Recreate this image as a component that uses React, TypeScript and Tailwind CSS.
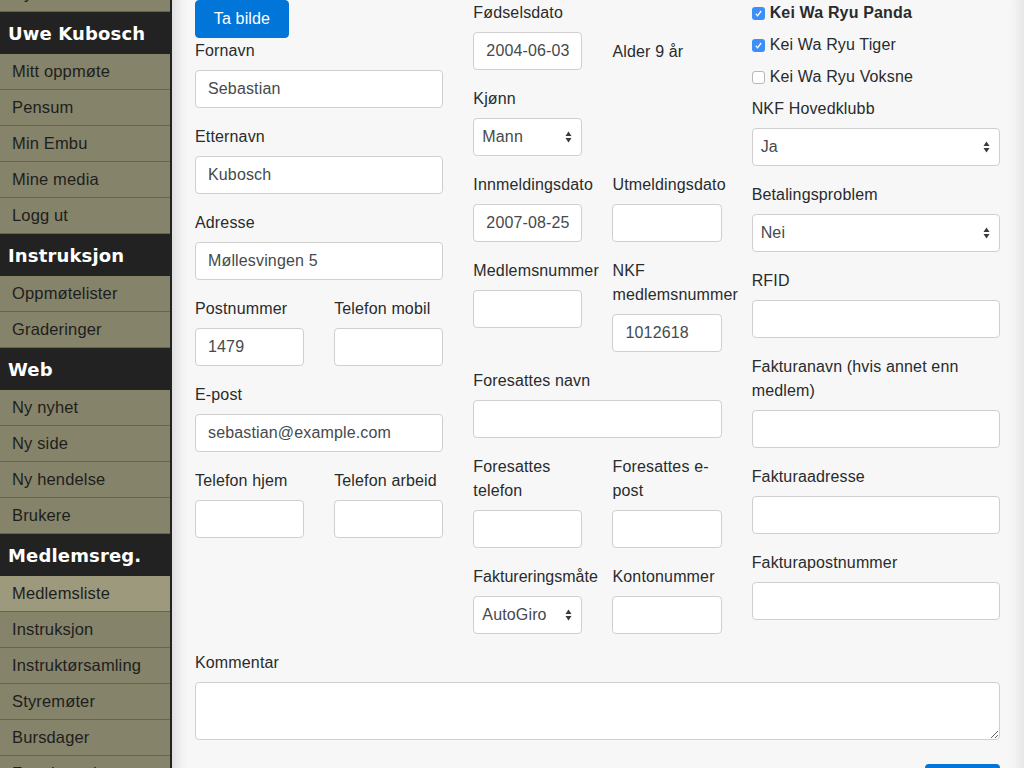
import type { ReactNode } from 'react';

type NavEntry = { kind: 'header' | 'item'; label: string; active?: boolean };

const NAV: NavEntry[] = [
  { kind: 'item', label: 'Nyheter' },
  { kind: 'header', label: 'Uwe Kubosch' },
  { kind: 'item', label: 'Mitt oppmøte' },
  { kind: 'item', label: 'Pensum' },
  { kind: 'item', label: 'Min Embu' },
  { kind: 'item', label: 'Mine media' },
  { kind: 'item', label: 'Logg ut' },
  { kind: 'header', label: 'Instruksjon' },
  { kind: 'item', label: 'Oppmøtelister' },
  { kind: 'item', label: 'Graderinger' },
  { kind: 'header', label: 'Web' },
  { kind: 'item', label: 'Ny nyhet' },
  { kind: 'item', label: 'Ny side' },
  { kind: 'item', label: 'Ny hendelse' },
  { kind: 'item', label: 'Brukere' },
  { kind: 'header', label: 'Medlemsreg.' },
  { kind: 'item', label: 'Medlemsliste', active: true },
  { kind: 'item', label: 'Instruksjon' },
  { kind: 'item', label: 'Instruktørsamling' },
  { kind: 'item', label: 'Styremøter' },
  { kind: 'item', label: 'Bursdager' },
  { kind: 'item', label: 'Fremhevede' },
];

const inputCls =
  'block w-full h-[38px] bg-white border border-[#cfcfcf] rounded-[4px] px-3 text-[16px] text-[#464a4c] outline-none';

function Sidebar() {
  return (
    <aside className="w-[172px] shrink-0 bg-[#858369] border-r-2 border-[#222]">
      <div className="-mt-[24px]">
        {NAV.map((n, i) =>
          n.kind === 'header' ? (
            <div
              key={i}
              className="h-[42px] bg-[#222] text-white font-bold text-[18px] pl-2 flex items-center font-['DejaVu_Sans',Verdana,sans-serif]"
            >
              {n.label}
            </div>
          ) : (
            <div
              key={i}
              className={`h-[36px] border-b border-[#67654f] pl-3 flex items-center text-[16.5px] text-[#1e1e1e] ${
                n.active ? 'bg-[#9c997d]' : ''
              }`}
            >
              {n.label}
            </div>
          )
        )}
      </div>
    </aside>
  );
}

function Label({ children }: { children: ReactNode }) {
  return (
    <label className="block leading-6 text-[16px] text-[#292b2c] mb-2">
      <span className="relative top-[1px]">{children}</span>
    </label>
  );
}

function Field({ label, value = '' }: { label: ReactNode; value?: string }) {
  return (
    <div className="mb-4">
      <Label>{label}</Label>
      <input className={inputCls} defaultValue={value} />
    </div>
  );
}

function Arrows() {
  return (
    <svg width="7" height="12" viewBox="0 0 7 12" className="absolute right-[9px] top-1/2 -translate-y-1/2">
      <path d="M3.5 0.5 L6.5 5 L0.5 5 Z" fill="#3a3a3a" />
      <path d="M3.5 11.5 L6.5 7 L0.5 7 Z" fill="#3a3a3a" />
    </svg>
  );
}

function SelectField({ label, value }: { label: ReactNode; value: string }) {
  return (
    <div className="mb-4">
      <Label>{label}</Label>
      <div className="relative h-[38px] bg-white border border-[#cfcfcf] rounded-[4px] pl-2 flex items-center text-[16px] text-[#464a4c]">
        {value}
        <Arrows />
      </div>
    </div>
  );
}

function Check({ label, checked, bold }: { label: string; checked?: boolean; bold?: boolean }) {
  return (
    <div className="h-6 mb-2 flex items-center gap-[5px] translate-y-[1px]">
      {checked ? (
        <span className="w-[13px] h-[13px] rounded-[3px] bg-[#3b8ff5] flex items-center justify-center">
          <svg width="9" height="9" viewBox="0 0 9 9">
            <path d="M1.8 4.8 L3.6 6.8 L7.2 2" fill="none" stroke="white" strokeWidth="1.3" />
          </svg>
        </span>
      ) : (
        <span className="w-[13px] h-[13px] rounded-[3px] bg-white border border-[#b8b8b8]" />
      )}
      <span className={`text-[16px] text-[#292b2c] ${bold ? 'font-bold' : ''}`}>{label}</span>
    </div>
  );
}

export default function App() {
  return (
    <div className="flex min-h-[768px] font-['Liberation_Sans',Arial,sans-serif] tracking-[0.15px]">
      <Sidebar />
      <main className="flex-1 bg-[#f7f7f7] pl-[23px] pr-[24px] shadow-[inset_16px_0_14px_-12px_rgba(0,0,0,0.13),inset_-16px_0_14px_-12px_rgba(0,0,0,0.09)]">
        <div className="grid grid-cols-3 gap-x-[30px]">
          <div>
            <button className="h-[38px] w-[94px] bg-[#0275d8] border border-[#0275d8] rounded-[4px] text-white text-[16px]">
              Ta bilde
            </button>
            <Field label="Fornavn" value="Sebastian" />
            <Field label="Etternavn" value="Kubosch" />
            <Field label="Adresse" value="Møllesvingen 5" />
            <div className="grid grid-cols-2 gap-x-[30px]">
              <Field label="Postnummer" value="1479" />
              <Field label="Telefon mobil" />
            </div>
            <Field label="E-post" value="sebastian@example.com" />
            <div className="grid grid-cols-2 gap-x-[30px]">
              <Field label="Telefon hjem" />
              <Field label="Telefon arbeid" />
            </div>
          </div>

          <div>
            <div className="grid grid-cols-2 gap-x-[30px]">
              <Field label="Fødselsdato" value="2004-06-03" />
              <div className="pt-8">
                <div className="h-[38px] flex items-center text-[16px] text-[#292b2c] translate-y-[1px]">Alder 9 år</div>
              </div>
            </div>
            <div className="grid grid-cols-2 gap-x-[30px]">
              <SelectField label="Kjønn" value="Mann" />
            </div>
            <div className="grid grid-cols-2 gap-x-[30px]">
              <Field label="Innmeldingsdato" value="2007-08-25" />
              <Field label="Utmeldingsdato" />
            </div>
            <div className="grid grid-cols-2 gap-x-[30px] items-start">
              <Field label="Medlemsnummer" />
              <Field label="NKF medlemsnummer" value="1012618" />
            </div>
            <Field label="Foresattes navn" />
            <div className="grid grid-cols-2 gap-x-[30px] items-start">
              <Field label="Foresattes telefon" />
              <Field label="Foresattes e-post" />
            </div>
            <div className="grid grid-cols-2 gap-x-[30px]">
              <SelectField label={<span className="tracking-normal">Faktureringsmåte</span>} value="AutoGiro" />
              <Field label="Kontonummer" />
            </div>
          </div>

          <div>
            <Check label="Kei Wa Ryu Panda" checked bold />
            <Check label="Kei Wa Ryu Tiger" checked />
            <Check label="Kei Wa Ryu Voksne" />
            <SelectField label="NKF Hovedklubb" value="Ja" />
            <SelectField label="Betalingsproblem" value="Nei" />
            <Field label="RFID" />
            <Field label="Fakturanavn (hvis annet enn medlem)" />
            <Field label="Fakturaadresse" />
            <Field label="Fakturapostnummer" />
          </div>
        </div>

        <div>
          <Label>Kommentar</Label>
          <textarea className="block w-full h-[58px] bg-white border border-[#cfcfcf] rounded-[4px] px-3 py-2 text-[16px] outline-none" />
        </div>
        <div className="flex justify-end mt-6">
          <button className="h-[38px] w-[75px] bg-[#0275d8] rounded-[4px] text-white text-[16px]">Lagre</button>
        </div>
      </main>
    </div>
  );
}
